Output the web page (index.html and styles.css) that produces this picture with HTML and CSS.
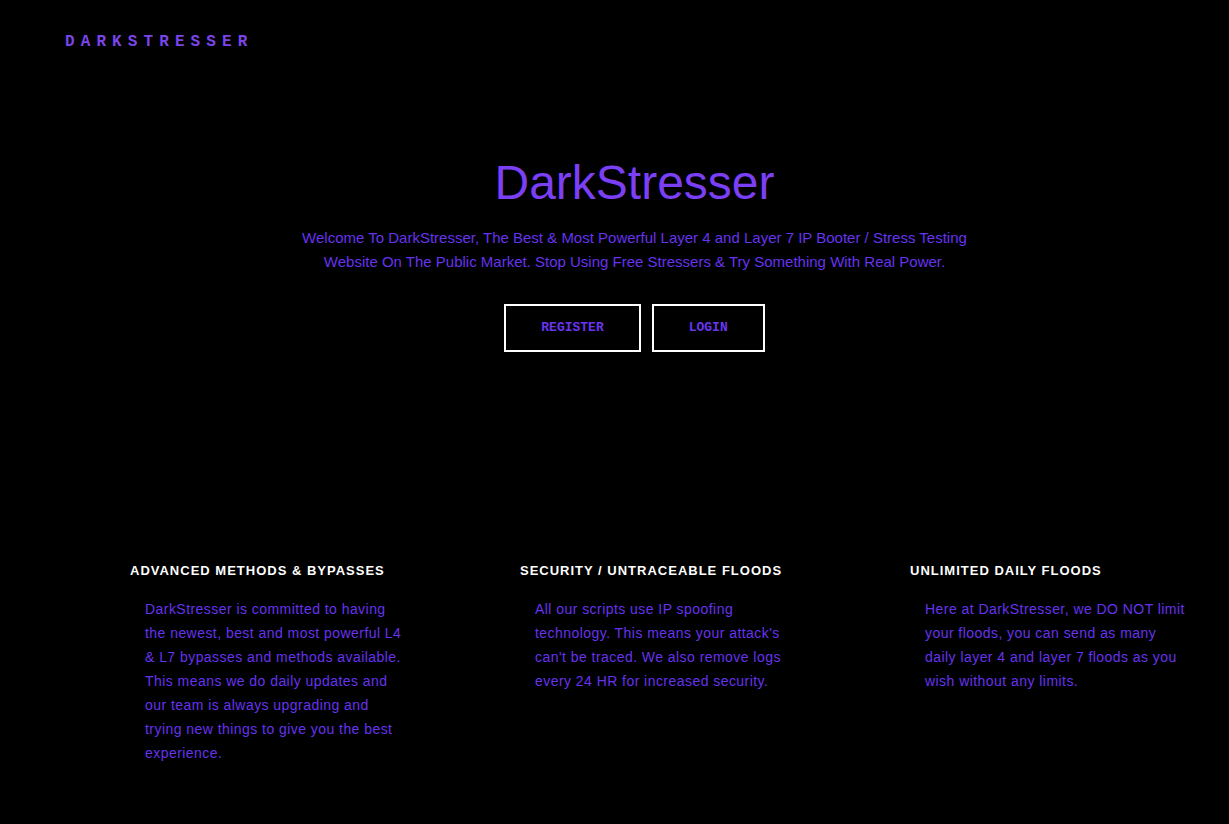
FILE: index.html
```html
<!DOCTYPE html>
<html lang="en">
<head>
<meta charset="utf-8">
<title>DarkStresser</title>
<link rel="stylesheet" href="styles.css">
</head>
<body>
<header class="topbar">
  <a class="brand" href="#">DARKSTRESSER</a>
</header>
<section class="hero">
  <h1 class="hero-title">DarkStresser</h1>
  <p class="hero-text">Welcome To DarkStresser, The Best &amp; Most Powerful Layer 4 and Layer 7 IP Booter / Stress Testing<br>Website On The Public Market. Stop Using Free Stressers &amp; Try Something With Real Power.</p>
  <div class="hero-actions">
    <a class="btn btn-register" href="#">REGISTER</a>
    <a class="btn btn-login" href="#">LOGIN</a>
  </div>
</section>
<section class="features">
  <div class="feature">
    <h3 class="feature-title">ADVANCED METHODS &amp; BYPASSES</h3>
    <p class="feature-text">DarkStresser is committed to having the newest, best and most powerful L4 &amp; L7 bypasses and methods available. This means we do daily updates and our team is always upgrading and trying new things to give you the best experience.</p>
  </div>
  <div class="feature">
    <h3 class="feature-title">SECURITY / UNTRACEABLE FLOODS</h3>
    <p class="feature-text">All our scripts use IP spoofing technology. This means your attack's can't be traced. We also remove logs every 24 HR for increased security.</p>
  </div>
  <div class="feature">
    <h3 class="feature-title">UNLIMITED DAILY FLOODS</h3>
    <p class="feature-text">Here at DarkStresser, we DO NOT limit your floods, you can send as many daily layer 4 and layer 7 floods as you wish without any limits.</p>
  </div>
</section>
</body>
</html>
```

FILE: styles.css
```css
html, body {
  margin: 0;
  padding: 0;
  background: #000;
}
body {
  font-family: "Liberation Sans", Arial, sans-serif;
  color: #6633ee;
  min-height: 824px;
}
.topbar {
  padding: 32px 0 0 65px;
  height: 29px;
}
.brand {
  font-family: "Liberation Mono", "Courier New", monospace;
  font-weight: bold;
  font-size: 16px;
  letter-spacing: 6.1px;
  color: #7a45e8;
  text-decoration: none;
  line-height: 20px;
}
.hero {
  display: flex;
  flex-direction: column;
  align-items: center;
  padding: 92px 0 0 40px;
}
.hero-title {
  margin: 0;
  font-weight: normal;
  font-size: 48px;
  line-height: 60px;
  color: #7b3ff5;
}
.hero-text {
  margin: 13px 0 0;
  font-size: 15px;
  line-height: 24px;
  text-align: center;
  color: #6633ee;
}
.hero-actions {
  display: flex;
  gap: 11px;
  margin-top: 30px;
}
.btn {
  display: block;
  border: 2px solid #fff;
  padding: 15px 35px 16px;
  font-family: "Liberation Mono", "Courier New", monospace;
  font-weight: bold;
  font-size: 13px;
  line-height: 13px;
  color: #6a35f0;
  text-decoration: none;
}
.features {
  display: grid;
  grid-template-columns: 275px 275px 275px;
  column-gap: 115px;
  padding: 210px 0 0 130px;
}
.feature-title {
  margin: 0;
  font-size: 13px;
  font-weight: bold;
  letter-spacing: 1px;
  line-height: 18px;
  color: #fff;
  white-space: nowrap;
}
.feature-text {
  margin: 17px 0 0 15px;
  width: 261px;
  font-size: 14px;
  line-height: 24px;
  letter-spacing: 0.45px;
  color: #6633ee;
}
```
